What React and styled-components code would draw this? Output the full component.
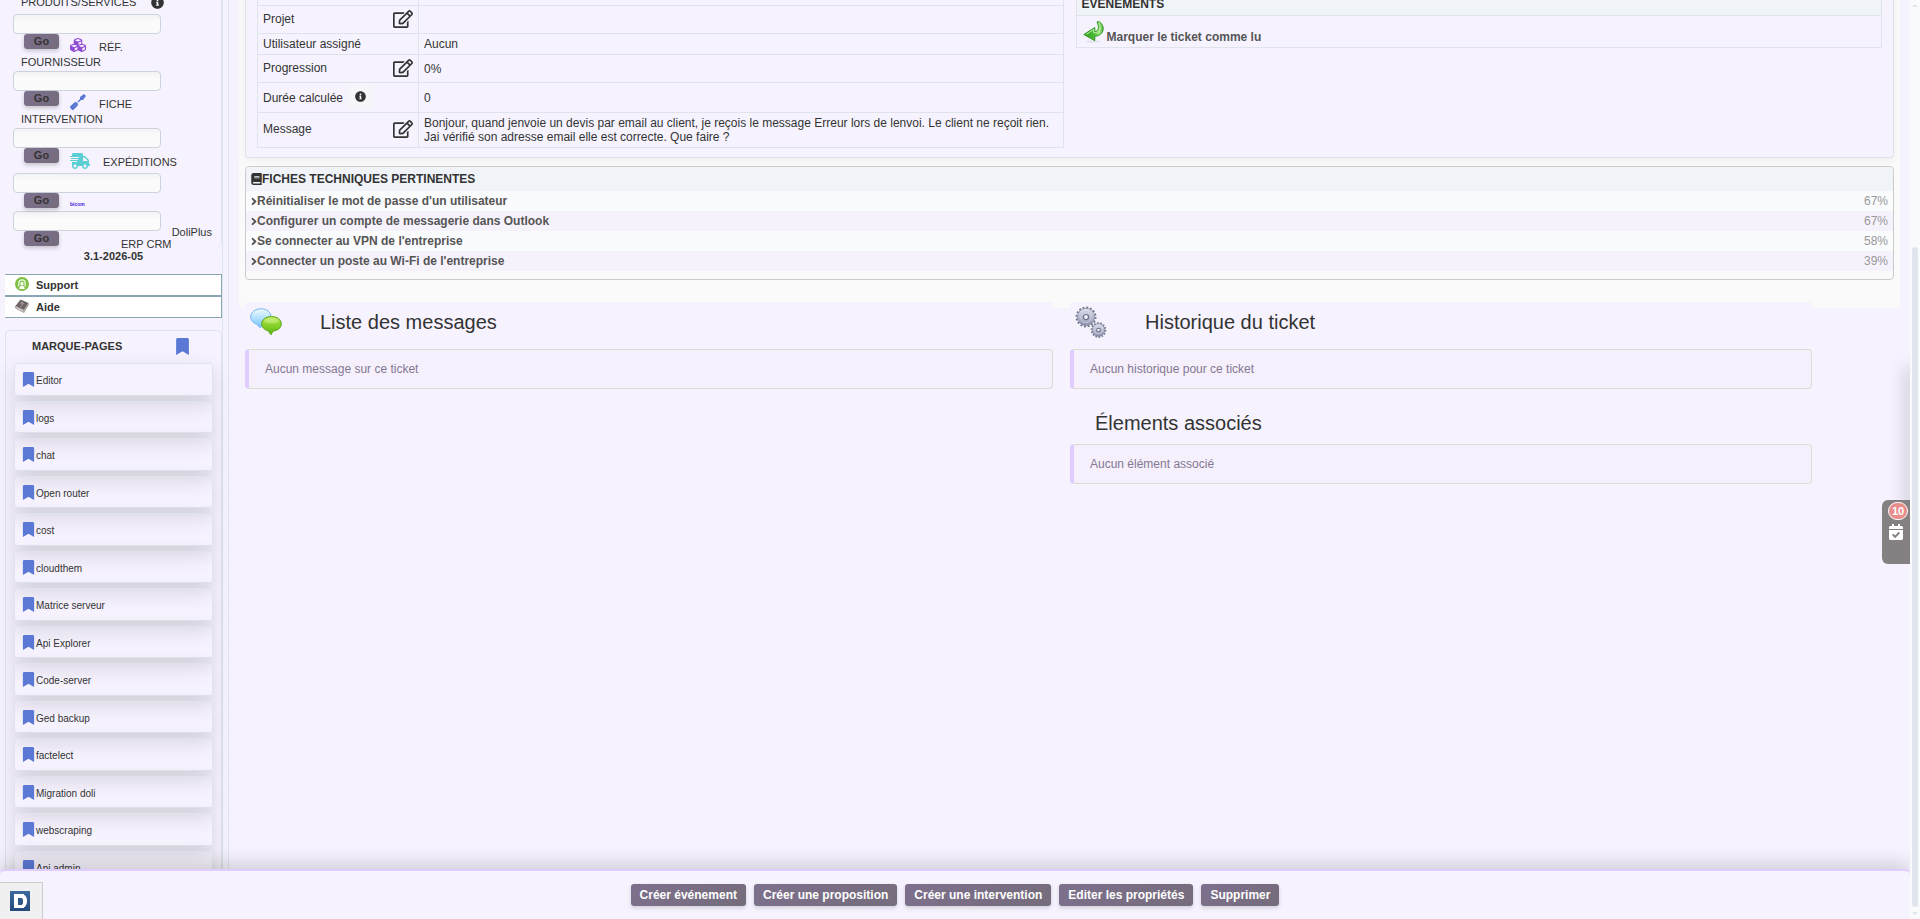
import styled, { createGlobalStyle } from 'styled-components';
import {
  FaAngleRight,
  FaBook,
  FaBookmark,
  FaCalendarCheck,
  FaCubes,
  FaInfoCircle,
  FaRegEdit,
  FaScrewdriver,
  FaShippingFast,
} from 'react-icons/fa';

const GlobalStyle = createGlobalStyle`
  * {
    box-sizing: border-box;
  }
  body {
    margin: 0;
    overflow: hidden;
    background: #f6f3fe;
    color: #333;
    font-family: 'Liberation Sans', Arial, sans-serif;
    font-size: 12px;
    line-height: 14px;
  }
  a {
    color: inherit;
    text-decoration: none;
  }
  svg {
    flex: none;
    display: block;
  }
`;

const Shell = styled.div`
  display: grid;
  grid-template-columns: minmax(0, 1fr) 10px;
  height: 100vh;
`;

const Page = styled.div`
  position: relative;
  display: grid;
  grid-template-rows: minmax(0, 1fr) auto;
  min-height: 0;
  overflow: hidden;
`;

const Body = styled.div`
  display: flex;
  min-height: 0;
  overflow: hidden;
`;

/* left column */

const Sidebar = styled.aside`
  flex: none;
  width: 223px;
  padding-left: 5px;
  border-right: 1px solid #dde4ec;
`;

const SearchBlock = styled.form`
  width: 217px;
  padding-left: 8px;
  border-right: 1px solid #dfe4ec;
  border-bottom-right-radius: 8px;
`;

const FirstLabel = styled.label`
  display: flex;
  align-items: center;
  gap: 15px;
  height: 18px;
  margin-top: -4px;
  padding: 0 0 5px 8px;
  font-size: 11px;
  line-height: 13px;
`;

const Field = styled.div`
  margin-bottom: ${(props) => (props.$last ? '-23px' : '0')};
`;

const SearchInput = styled.input`
  display: block;
  width: 148px;
  height: 20px;
  padding: 0 4px;
  border: 1px solid #ccd3dc;
  border-radius: 4px;
  outline: none;
  background: linear-gradient(#f3f3f6, #fbfbfb 40%);
`;

const footHeights = { short: '18px', normal: '24px', tall: '25px' };

const FieldFoot = styled.div`
  display: flex;
  align-items: flex-start;
  height: ${(props) => footHeights[props.$size || 'normal']};
  padding-left: 11px;
`;

const GoButton = styled.button`
  width: 35px;
  height: 15px;
  padding: 0;
  border: none;
  border-radius: 3px;
  background: linear-gradient(135deg, #7d708d, #756c7c);
  box-shadow: 0 2px 4px rgba(0, 0, 0, 0.2);
  color: #333;
  font: bold 11px/15px 'Liberation Sans', Arial, sans-serif;
`;

const FieldIcon = styled.span`
  padding: 3px 13px 0 11px;
  color: ${(props) => props.$color};
`;

const FieldLabel = styled.label`
  align-self: flex-end;
  padding-bottom: 4px;
  font-size: 11px;
  line-height: 13px;
`;

const FieldLabelEnd = styled.label`
  display: block;
  height: 13px;
  margin: -2px 0 2px;
  padding-left: 8px;
  font-size: 11px;
  line-height: 13px;
`;

const Brand = styled.span`
  padding: 9px 0 0 11px;
  color: #4a20e8;
  font-size: 5px;
  font-weight: bold;
  line-height: 5px;
`;

const Version = styled.div`
  display: flex;
  flex-direction: column;
  width: 217px;
  font-size: 11px;
  line-height: 12px;
`;

const VersionName = styled.span`
  align-self: flex-end;
  padding-right: 10px;
`;

const VersionKind = styled.span`
  padding-left: 116px;
`;

const VersionNumber = styled.strong`
  text-align: center;
`;

const HelpLinks = styled.nav`
  width: 217px;
  margin: 12px 0;
`;

const HelpLink = styled.a`
  display: flex;
  align-items: center;
  gap: 7px;
  height: 22px;
  padding-left: 10px;
  border: 1px solid #8aa5b3;
  border-left: none;
  background: #fff;
  font-size: 11px;
  font-weight: bold;

  svg {
    margin-bottom: 3px;
  }
`;

const Bookmarks = styled.section`
  width: 217px;
  padding: 6px 8px 0;
  border: 1px solid #dfe4ec;
  border-radius: 4px;
`;

const BookmarksHead = styled.h2`
  display: flex;
  justify-content: space-between;
  align-items: center;
  height: 18px;
  margin: 0 0 8px;
  padding: 0 22px 0 18px;
  font-size: 11px;

  svg {
    color: #5b78d4;
  }
`;

const BookmarkList = styled.ul`
  display: flex;
  flex-direction: column;
  gap: 5px;
  margin: 0;
  padding: 0;
  list-style: none;
`;

const BookmarkItem = styled.li`
  height: 32px;
  border: 1px solid #dfe4ec;
  border-radius: 3px;
  box-shadow: 0 8px 22px rgba(0, 0, 0, 0.14);

  &:nth-child(odd) {
    height: 33px;
  }
`;

const BookmarkLink = styled.a`
  display: flex;
  align-items: center;
  height: 31px;
  padding: 2px 0 0 6px;
  font-size: 10px;

  svg {
    margin-bottom: 3px;
    color: #5b78d4;
  }
`;

/* main column */

const Main = styled.main`
  flex: 1;
  min-width: 0;
  margin-left: 5px;
  padding: 0 10px;
  border-left: 1px solid #dde4ec;
`;

const Panel = styled.div`
  display: flow-root;
  height: 308px;
  padding: 0 6px;
  border-radius: 0 0 4px 4px;
  background: #fafafa;
`;

const TicketCard = styled.section`
  display: grid;
  grid-template-columns: 1fr 1fr;
  align-items: start;
  gap: 12px;
  margin-top: -9px;
  padding: 0 11px 9px;
  border: 1px solid #dfe2ea;
  border-top: none;
  border-radius: 0 0 4px 4px;
  background: #f6f3fe;
  box-shadow: 0 2px 8px rgba(0, 0, 0, 0.05);
`;

const InfoTable = styled.table`
  width: 100%;
  border-collapse: collapse;
  border: 1px solid #dfe4ec;
`;

const InfoRow = styled.tr`
  height: ${(props) => props.$height}px;
  border-bottom: 1px solid #dfe4ec;
`;

const InfoLabel = styled.th`
  width: 161px;
  padding: 0 5px;
  border-right: 1px solid #dfe4ec;
  font-weight: normal;
  text-align: left;
`;

const LabelLine = styled.div`
  display: flex;
  align-items: center;
  justify-content: ${(props) => (props.$info ? 'flex-start' : 'space-between')};
  padding-bottom: ${(props) => (props.$info ? '0' : '2px')};
`;

const InfoHint = styled.span`
  margin-left: 5px;
  padding: 5px 7px 7px;
  background: #f6f5f8;
`;

const EditLink = styled.a`
  color: #333;
`;

const InfoValue = styled.td`
  padding: 0 5px;
`;

const EventsHead = styled.th`
  height: 24px;
  padding: 0 5px;
  border-bottom: 1px solid #dfe4ec;
  background: #f0f4f8;
  text-align: left;
  vertical-align: middle;
`;

const EventsCell = styled.td`
  height: 32px;
  padding: 0 6px;
`;

const EventLink = styled.a`
  display: flex;
  align-items: flex-end;
  gap: 3px;
  color: #555;
  font-weight: bold;
  line-height: 12px;
`;

const Sheets = styled.section`
  margin-top: 8px;
  padding-bottom: 8px;
  border: 1px solid #ccc;
  border-radius: 4px;
  overflow: hidden;
`;

const SheetsHead = styled.h3`
  display: flex;
  align-items: center;
  height: 24px;
  margin: 0;
  padding: 0 5px;
  background: #f0f4f8;
  font-size: 12px;

  svg {
    width: 11px;
  }
`;

const SheetRow = styled.div`
  display: flex;
  align-items: center;
  justify-content: space-between;
  height: 20px;
  padding: 0 5px;
  background: #fafbfd;

  &:nth-child(odd) {
    background: #f6f2fc;
  }
`;

const SheetLink = styled.a`
  display: flex;
  align-items: center;
  color: #555;
  font-weight: bold;

  svg {
    width: 6px;
  }
`;

const Score = styled.span`
  color: #999;
`;

const Columns = styled.div`
  display: grid;
  grid-template-columns: 49% 45%;
  gap: 17px;
  margin: -6px 6px 0;
`;

const Column = styled.section`
  border-radius: 4px;
  background: #f6f3fe;
`;

const SectionTitle = styled.h2`
  display: flex;
  align-items: center;
  height: ${(props) => (props.$sub ? '55px' : '47px')};
  margin: 0;
  padding: ${(props) => (props.$sub ? '13px 0 0 25px' : '0 0 8px 5px')};
  font-size: 20px;
  font-weight: normal;
  line-height: 24px;

  svg {
    margin-right: 38px;
  }
`;

const EmptyNote = styled.p`
  margin: 0;
  padding: 12px 16px;
  border: 1px solid #dddcd0;
  border-left: 4px solid #e1ccff;
  border-radius: 4px;
  background: #f6f0fc;
  color: #827892;
`;

/* bottom bar, dock and scroll track */

const ActionBar = styled.footer`
  position: relative;
  display: flex;
  align-items: center;
  justify-content: center;
  gap: 8px;
  height: 50px;
  border-top: 2px solid #e1ccff;
  border-radius: 5px 5px 0 0;
  background: #f6f3fe;
  box-shadow: 0 -4px 20px rgba(0, 0, 0, 0.18);
`;

const ActionButton = styled.button`
  height: 22px;
  padding: 0 9px;
  border: none;
  border-radius: 3px;
  background: linear-gradient(135deg, #7d708d, #756c7c);
  box-shadow: 0 2px 4px rgba(0, 0, 0, 0.15);
  color: #fff;
  font: bold 12px/14px 'Liberation Sans', Arial, sans-serif;
`;

const DebugTab = styled.a`
  position: absolute;
  left: 0;
  bottom: 0;
  display: flex;
  align-items: center;
  width: 43px;
  height: 37px;
  padding-left: 10px;
  border: 1px solid #ccc;
  border-width: 1px 1px 0 0;
  background: #f0f0f0;
`;

const DrawerEdge = styled.div`
  position: absolute;
  top: 370px;
  right: -2px;
  width: 2px;
  height: 170px;
  box-shadow: 0 0 18px 2px rgba(0, 0, 0, 0.35);
`;

const Dock = styled.button`
  position: absolute;
  top: 500px;
  right: 0;
  display: flex;
  flex-direction: column;
  align-items: center;
  gap: 4px;
  width: 28px;
  height: 64px;
  padding: 2px 0 0;
  border: none;
  border-radius: 6px 0 0 6px;
  background: #858081;
  color: #fff;
`;

const DockCount = styled.span`
  width: 20px;
  height: 18px;
  margin-left: 4px;
  border: 1px solid #fff;
  border-radius: 10px;
  background: #e88c8c;
  font: bold 11px/17px 'Liberation Sans', Arial, sans-serif;
`;

const ScrollTrack = styled.div`
  display: flex;
  flex-direction: column;
  align-items: center;
  padding: 4px 0;
  background: #f9fafc;
`;

const ScrollGap = styled.div`
  flex: 4;
`;

const ScrollThumb = styled.div`
  flex: 11;
  width: 6px;
  margin-bottom: 5px;
  border-radius: 3px;
  background: #e1e6ee;
`;

const ScrollArrow = styled.span`
  border: solid transparent;
  border-width: ${(props) => (props.$up ? '0 3px 3px' : '3px 3px 0')};
  border-bottom-color: #e1e6ee;
  border-top-color: #e1e6ee;
`;

const bookmarks = [
  'Editor',
  'logs',
  'chat',
  'Open router',
  'cost',
  'cloudthem',
  'Matrice serveur',
  'Api Explorer',
  'Code-server',
  'Ged backup',
  'factelect',
  'Migration doli',
  'webscraping',
  'Api admin',
];

const sheets = [
  { title: "Réinitialiser le mot de passe d'un utilisateur", score: 67 },
  { title: 'Configurer un compte de messagerie dans Outlook', score: 67 },
  { title: "Se connecter au VPN de l'entreprise", score: 58 },
  { title: "Connecter un poste au Wi-Fi de l'entreprise", score: 39 },
];

const actions = [
  'Créer événement',
  'Créer une proposition',
  'Créer une intervention',
  'Editer les propriétés',
  'Supprimer',
];

function SupportIcon() {
  return (
    <svg width="14" height="14" viewBox="0 0 14 14">
      <circle cx="7" cy="7" r="7" fill="#7fbf45" />
      <path d="M3.8 9.500V6a3.200 3.200 0 0 1 6.400 0v3.500" fill="none" stroke="#eef9e2" strokeWidth="1.300" />
      <ellipse cx="7" cy="6.800" rx="1.700" ry="2" fill="#eef9e2" />
      <path d="M4.200 12c.3-2.600 1.300-3 2.800-3s2.500.4 2.800 3z" fill="#fff" />
    </svg>
  );
}

function HelpBookIcon() {
  return (
    <svg width="14" height="14" viewBox="0 0 14 14">
      <path d="M5.500.500 13.500 4 9 11 .500 7z" fill="#6f6464" />
      <path d="M.500 7 9 11v2.500L.800 9.300z" fill="#d9d3d0" stroke="#7b6f6f" strokeWidth=".6" />
      <path d="M9 11l4.500-7 .2 2.200L9 13.500z" fill="#a59b99" />
      <path d="M5.600 4.200c1-1.200 3-.4 2.200.7-.4.600-1.200.5-1.400 1.300M6 7.200v.7" fill="none" stroke="#d6cfcd" strokeWidth=".9" />
    </svg>
  );
}

function ReturnArrowIcon() {
  return (
    <svg width="21" height="22" viewBox="0 0 21 22">
      <defs>
        <linearGradient id="arrow" x1="0" y1="0" x2="1" y2="0">
          <stop offset="0" stopColor="#2f9e22" />
          <stop offset=".55" stopColor="#4dbb35" />
          <stop offset=".8" stopColor="#a5e98a" />
          <stop offset="1" stopColor="#4caf3c" />
        </linearGradient>
      </defs>
      <ellipse cx="10" cy="20.500" rx="8" ry="1.200" fill="#e3e1ea" />
      <path
        d="M14 .800h2.500c3.500 2.500 5 7 2.600 10.700-1.700 2.600-4.300 3.600-7.300 3.800v4.400L.800 13.500 11.800 6.500v4.200c3.500-.4 4.900-3.700 2.200-9.900z"
        fill="url(#arrow)"
        stroke="#389a2c"
        strokeWidth="1"
      />
      <path d="M3.200 13.400l7.500-4.800v3.200c3.500.2 6.500-1.500 7-5.200" fill="none" stroke="#c5f3b0" strokeWidth=".9" />
    </svg>
  );
}

function ChatIcon() {
  return (
    <svg width="32" height="28" viewBox="0 0 32 28">
      <defs>
        <linearGradient id="bubbleBlue" x1="0" y1="0" x2="0" y2="1">
          <stop offset="0" stopColor="#f2fbff" />
          <stop offset="1" stopColor="#6fc4fb" />
        </linearGradient>
        <linearGradient id="bubbleGreen" x1="0" y1="0" x2="0" y2="1">
          <stop offset="0" stopColor="#b5e84a" />
          <stop offset="1" stopColor="#58b80c" />
        </linearGradient>
      </defs>
      <path
        d="M11 .800c5.700 0 10 3.500 10 8 0 4.600-4 8-9.500 8.100l-1 3.100-3.600-3.600C3.200 15.200.700 12.400.700 8.800c0-4.500 4.600-8 10.300-8z"
        fill="url(#bubbleBlue)"
        stroke="#76b4f2"
      />
      <path
        d="M21.500 8.500c5.600 0 9.800 3.100 9.800 7.300 0 3.900-3.300 6.800-8.200 7.200L21 26.800l-2.800-4c-3.800-.8-6.500-3.500-6.500-7 0-4.200 4.200-7.300 9.800-7.300z"
        fill="url(#bubbleGreen)"
        stroke="#5aa51c"
      />
      <path d="M14 13.500c1.500-4.500 12-5 15-.5-3 2.500-11 3.500-15 .5z" fill="#e6f9b8" opacity=".4" />
    </svg>
  );
}

function GearsIcon() {
  return (
    <svg width="32" height="32" viewBox="0 0 32 32">
      <defs>
        <linearGradient id="metal" x1="0" y1="0" x2="0" y2="1">
          <stop offset="0" stopColor="#e4e6f2" />
          <stop offset="1" stopColor="#8b8fab" />
        </linearGradient>
      </defs>
      <circle cx="11" cy="11" r="9.200" fill="none" stroke="#767a90" strokeWidth="2.600" strokeDasharray="1.900 1.710" />
      <circle cx="11" cy="11" r="8.600" fill="url(#metal)" stroke="#8a8ea6" strokeWidth=".8" />
      <circle cx="11" cy="11" r="5.400" fill="none" stroke="#c9cce0" strokeWidth="1" />
      <circle cx="11" cy="11" r="2.500" fill="#f6f3fe" stroke="#6d7189" strokeWidth="1.200" />
      <circle cx="23.500" cy="24" r="6.800" fill="none" stroke="#767a90" strokeWidth="2.200" strokeDasharray="1.500 1.550" />
      <circle cx="23.500" cy="24" r="6.300" fill="url(#metal)" stroke="#80849d" strokeWidth=".8" />
      <circle cx="23.500" cy="24" r="3.900" fill="none" stroke="#c9cce0" strokeWidth=".9" />
      <circle cx="23.500" cy="24" r="1.800" fill="#f6f3fe" stroke="#6d7189" strokeWidth="1.100" />
    </svg>
  );
}

function LogoIcon() {
  return (
    <svg width="20" height="20" viewBox="0 0 20 20">
      <defs>
        <linearGradient id="logo" x1="0" y1="0" x2="0" y2="1">
          <stop offset="0" stopColor="#3d6a9c" />
          <stop offset="1" stopColor="#24497a" />
        </linearGradient>
      </defs>
      <rect width="20" height="20" fill="url(#logo)" />
      <rect x="4" y="3" width="10" height="14" fill="#fff" />
      <rect x="6" y="3" width="11" height="14" rx="6" fill="#fff" />
      <rect x="8" y="7" width="5" height="7" rx="2" fill="#2f5788" />
      <rect x="8" y="7" width="2" height="7" fill="#2f5788" />
    </svg>
  );
}

function SearchPanel() {
  return (
    <>
      <SearchBlock onSubmit={(e) => e.preventDefault()}>
        <FirstLabel htmlFor="s-product">
          PRODUITS/SERVICES
          <FaInfoCircle size={13} />
        </FirstLabel>
        <Field>
          <SearchInput id="s-product" type="text" />
          <FieldFoot>
            <GoButton>Go</GoButton>
            <FieldIcon $color="#8f4bd6">
              <FaCubes size={16} />
            </FieldIcon>
            <FieldLabel htmlFor="s-supplier">RÉF.</FieldLabel>
          </FieldFoot>
          <FieldLabelEnd htmlFor="s-supplier">FOURNISSEUR</FieldLabelEnd>
        </Field>
        <Field>
          <SearchInput id="s-supplier" type="text" />
          <FieldFoot>
            <GoButton>Go</GoButton>
            <FieldIcon $color="#5b78d4">
              <FaScrewdriver size={16} />
            </FieldIcon>
            <FieldLabel htmlFor="s-inter">FICHE</FieldLabel>
          </FieldFoot>
          <FieldLabelEnd htmlFor="s-inter">INTERVENTION</FieldLabelEnd>
        </Field>
        <Field>
          <SearchInput id="s-inter" type="text" />
          <FieldFoot $size="tall">
            <GoButton>Go</GoButton>
            <FieldIcon $color="#5bcfd4">
              <FaShippingFast size={20} />
            </FieldIcon>
            <FieldLabel htmlFor="s-ship">EXPÉDITIONS</FieldLabel>
          </FieldFoot>
        </Field>
        <Field>
          <SearchInput id="s-ship" type="text" />
          <FieldFoot $size="short">
            <GoButton>Go</GoButton>
            <Brand>bicom</Brand>
          </FieldFoot>
        </Field>
        <Field $last>
          <SearchInput type="text" aria-label="bicom" />
          <FieldFoot $size="short">
            <GoButton>Go</GoButton>
          </FieldFoot>
        </Field>
      </SearchBlock>
      <Version>
        <VersionName>DoliPlus</VersionName>
        <VersionKind>ERP CRM</VersionKind>
        <VersionNumber>3.1-2026-05</VersionNumber>
      </Version>
    </>
  );
}

function TicketInfo() {
  return (
    <InfoTable>
      <tbody>
        <InfoRow $height={14}>
          <InfoLabel />
          <InfoValue />
        </InfoRow>
        <InfoRow $height={28}>
          <InfoLabel>
            <LabelLine>
              Projet
              <EditLink href="#projet" aria-label="Modifier">
                <FaRegEdit size={20} />
              </EditLink>
            </LabelLine>
          </InfoLabel>
          <InfoValue />
        </InfoRow>
        <InfoRow $height={21}>
          <InfoLabel>Utilisateur assigné</InfoLabel>
          <InfoValue>Aucun</InfoValue>
        </InfoRow>
        <InfoRow $height={28}>
          <InfoLabel>
            <LabelLine>
              Progression
              <EditLink href="#progression" aria-label="Modifier">
                <FaRegEdit size={20} />
              </EditLink>
            </LabelLine>
          </InfoLabel>
          <InfoValue>0%</InfoValue>
        </InfoRow>
        <InfoRow $height={30}>
          <InfoLabel>
            <LabelLine $info>
              Durée calculée
              <InfoHint>
                <FaInfoCircle size={11} />
              </InfoHint>
            </LabelLine>
          </InfoLabel>
          <InfoValue>0</InfoValue>
        </InfoRow>
        <InfoRow $height={35}>
          <InfoLabel>
            <LabelLine>
              Message
              <EditLink href="#message" aria-label="Modifier">
                <FaRegEdit size={20} />
              </EditLink>
            </LabelLine>
          </InfoLabel>
          <InfoValue>
            Bonjour, quand jenvoie un devis par email au client, je reçois le message Erreur lors de lenvoi. Le client
            ne reçoit rien.
            <br />
            Jai vérifié son adresse email elle est correcte. Que faire ?
          </InfoValue>
        </InfoRow>
      </tbody>
    </InfoTable>
  );
}

export default function App() {
  return (
    <Shell>
      <GlobalStyle />
      <Page>
        <Body>
          <Sidebar>
            <SearchPanel />
            <HelpLinks>
              <HelpLink href="#support">
                <SupportIcon />
                Support
              </HelpLink>
              <HelpLink href="#aide">
                <HelpBookIcon />
                Aide
              </HelpLink>
            </HelpLinks>
            <Bookmarks>
              <BookmarksHead>
                MARQUE-PAGES
                <FaBookmark size={17} />
              </BookmarksHead>
              <BookmarkList>
                {bookmarks.map((name) => (
                  <BookmarkItem key={name}>
                    <BookmarkLink href="#bookmark">
                      <FaBookmark size={15} />
                      {name}
                    </BookmarkLink>
                  </BookmarkItem>
                ))}
              </BookmarkList>
            </Bookmarks>
          </Sidebar>

          <Main>
            <Panel>
              <TicketCard>
                <TicketInfo />
                <InfoTable>
                  <thead>
                    <tr>
                      <EventsHead>ÉVÉNEMENTS</EventsHead>
                    </tr>
                  </thead>
                  <tbody>
                    <tr>
                      <EventsCell>
                        <EventLink href="#lu">
                          <ReturnArrowIcon />
                          Marquer le ticket comme lu
                        </EventLink>
                      </EventsCell>
                    </tr>
                  </tbody>
                </InfoTable>
              </TicketCard>

              <Sheets>
                <SheetsHead>
                  <FaBook size={12} />
                  FICHES TECHNIQUES PERTINENTES
                </SheetsHead>
                {sheets.map((sheet) => (
                  <SheetRow key={sheet.title}>
                    <SheetLink href="#fiche">
                      <FaAngleRight size={13} />
                      {sheet.title}
                    </SheetLink>
                    <Score>{sheet.score}%</Score>
                  </SheetRow>
                ))}
              </Sheets>
            </Panel>

            <Columns>
              <Column>
                <SectionTitle>
                  <ChatIcon />
                  Liste des messages
                </SectionTitle>
                <EmptyNote>Aucun message sur ce ticket</EmptyNote>
              </Column>
              <Column>
                <SectionTitle>
                  <GearsIcon />
                  Historique du ticket
                </SectionTitle>
                <EmptyNote>Aucun historique pour ce ticket</EmptyNote>
                <SectionTitle $sub>Élements associés</SectionTitle>
                <EmptyNote>Aucun élément associé</EmptyNote>
              </Column>
            </Columns>
          </Main>
        </Body>

        <ActionBar>
          {actions.map((action) => (
            <ActionButton key={action}>{action}</ActionButton>
          ))}
          <DebugTab href="#debug" aria-label="Debug">
            <LogoIcon />
          </DebugTab>
        </ActionBar>

        <DrawerEdge />
        <Dock>
          <DockCount>10</DockCount>
          <FaCalendarCheck size={16} />
        </Dock>
      </Page>

      <ScrollTrack>
        <ScrollArrow $up />
        <ScrollGap />
        <ScrollThumb />
        <ScrollArrow />
      </ScrollTrack>
    </Shell>
  );
}
